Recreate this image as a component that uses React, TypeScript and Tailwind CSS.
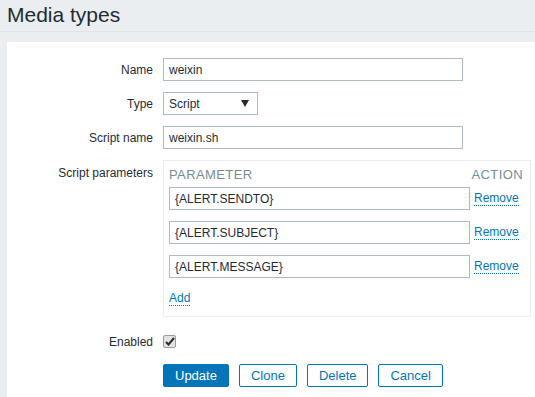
const params = ["{ALERT.SENDTO}", "{ALERT.SUBJECT}", "{ALERT.MESSAGE}"];

const Row = ({ label, children, top = false }: { label: string; children: React.ReactNode; top?: boolean }) => (
  <div className={`flex ${top ? "items-start" : "items-center"}`}>
    <div className={`w-[146px] shrink-0 text-right text-[12px] text-[#1f2c33] ${top ? "pt-[4px]" : ""}`}>{label}</div>
    <div className="ml-[10px]">{children}</div>
  </div>
);

const TextInput = ({ value, width }: { value: string; width: string }) => (
  <div className={`h-[23px] ${width} border border-[#acbbc4] bg-white pl-[5px] flex items-center text-[12px] text-[#1f2c33]`}>
    {value}
  </div>
);

const Button = ({ children, primary = false }: { children: React.ReactNode; primary?: boolean }) => (
  <button
    className={`h-[23px] px-[11px] rounded-[2px] border border-[#0275b8] text-[13px] leading-none ${
      primary ? "bg-[#0275b8] text-white" : "bg-white text-[#0275b8]"
    }`}
  >
    {children}
  </button>
);

export default function App() {
  return (
    <div
      className="min-h-screen w-full overflow-hidden bg-[#ebeef0]"
      style={{ fontFamily: "'Liberation Sans', Arial, sans-serif" }}
    >
      <div className="h-[32px] mx-0 border-b border-[#dfe4e7] pl-[7px] pt-[1px]">
        <h1 className="text-[21px] leading-[27px] text-[#1f2c33]">Media types</h1>
      </div>
      <div className="mt-[10px] ml-[7px] bg-white pt-[16px] min-h-[360px]">
        <div className="flex flex-col gap-[11px]">
          <Row label="Name">
            <TextInput value="weixin" width="w-[300px]" />
          </Row>
          <Row label="Type">
            <div className="h-[23px] w-[95px] border border-[#acbbc4] pl-[5px] pr-[8px] flex items-center justify-between text-[12px] text-[#1f2c33]">
              <span>Script</span>
              <svg width="8" height="7" viewBox="0 0 8 7">
                <path d="M0 0H8L4 7Z" fill="#1f2c33" />
              </svg>
            </div>
          </Row>
          <Row label="Script name">
            <TextInput value="weixin.sh" width="w-[300px]" />
          </Row>
          <Row label="Script parameters" top>
            <div className="w-[368px] border border-[#ebeef0] pl-[5px] pr-[7px] pt-[6px] pb-[7px]">
              <div className="flex items-center text-[13px] text-[#768d99] h-[16px] tracking-[0.4px]">
                <div className="w-[307px]">PARAMETER</div>
                <div>ACTION</div>
              </div>
              <div className="mt-[4px] flex flex-col gap-[11px]">
                {params.map((p) => (
                  <div key={p} className="flex items-center">
                    <TextInput value={p} width="w-[301px]" />
                    <a className="ml-[4px] text-[12px] text-[#0275b8] border-b border-dotted border-[#0275b8] leading-[14px]">
                      Remove
                    </a>
                  </div>
                ))}
              </div>
              <div className="mt-[7px]">
                <a className="text-[12px] text-[#0275b8] border-b border-dotted border-[#0275b8] leading-[14px]">Add</a>
              </div>
            </div>
          </Row>
        </div>
        <div className="mt-[13px]">
          <Row label="Enabled">
            <div className="h-[23px] flex items-center">
              <div className="w-[13px] h-[13px] rounded-[2px] border border-[#9a9a9a] bg-[#e3e3e3] flex items-center justify-center">
                <svg width="10" height="9" viewBox="0 0 10 9">
                  <path d="M1 5L3.5 7.5L9 1" stroke="#2b2b2b" strokeWidth="2" fill="none" />
                </svg>
              </div>
            </div>
          </Row>
        </div>
        <div className="mt-[11px] ml-[156px] flex gap-[10px]">
          <Button primary>Update</Button>
          <Button>Clone</Button>
          <Button>Delete</Button>
          <Button>Cancel</Button>
        </div>
      </div>
    </div>
  );
}
